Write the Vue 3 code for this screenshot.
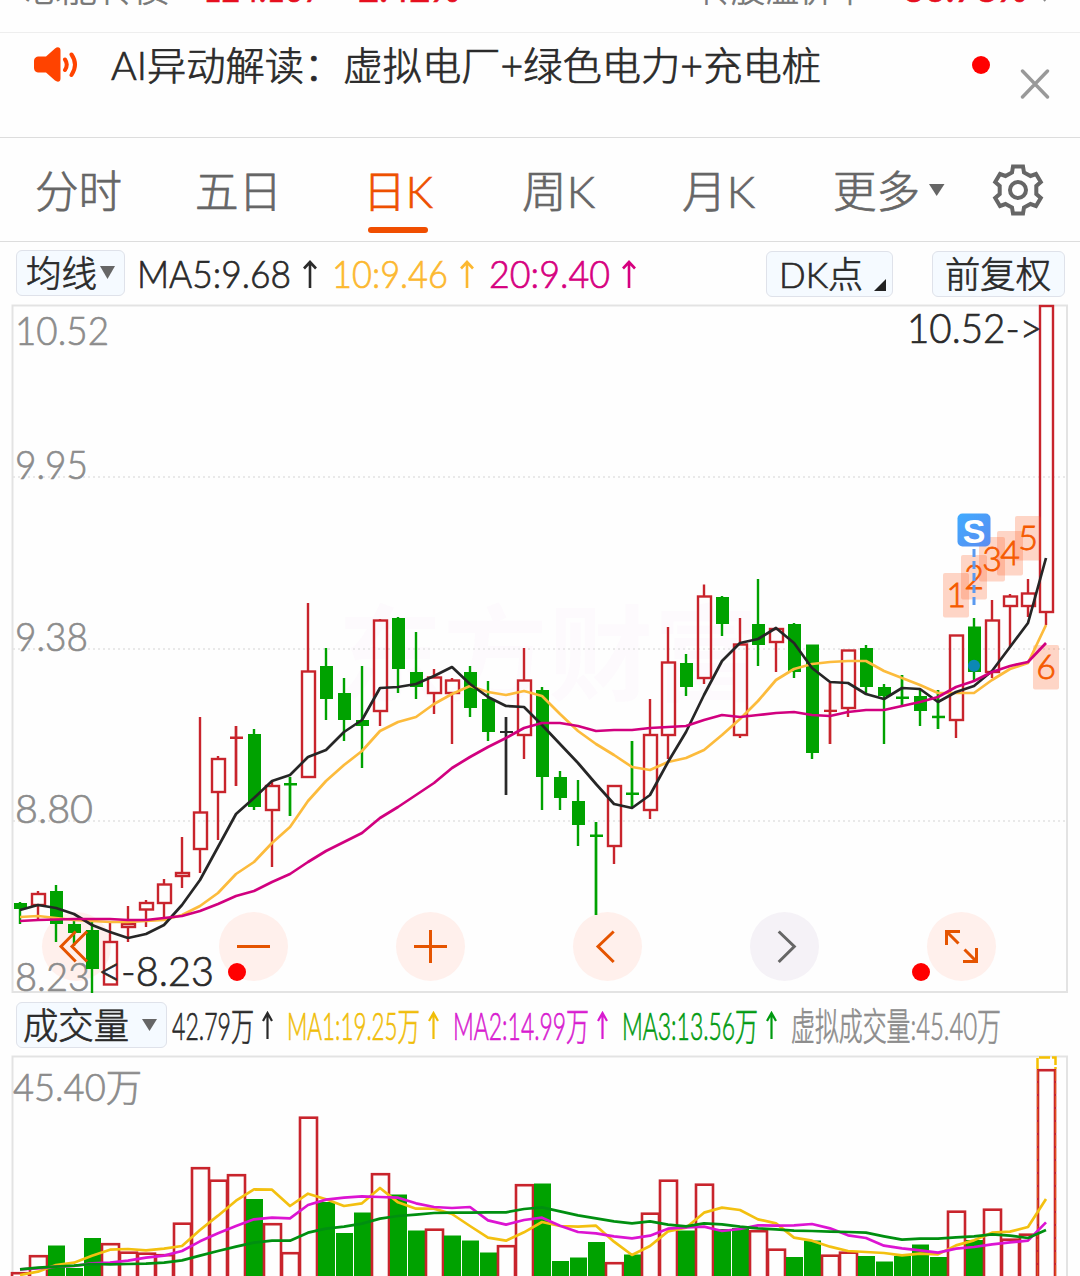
<script setup>
import { h } from 'vue'

// Single text run squeezed or stretched to an exact width
const FitText = (props) =>
  h('svg', { width: props.width, height: props.size * 1.3, class: 'fit', style: { fontSize: props.size + 'px' } }, [
    h('text', {
      x: 0,
      y: props.size,
      fill: 'currentColor',
      textLength: props.width,
      lengthAdjust: 'spacingAndGlyphs',
    }, props.text),
  ])
FitText.props = ['text', 'width', 'size']

const tabs = [
  { text: '分时', width: 87 },
  { text: '五日', width: 87 },
  { text: '日K', width: 70, active: true },
  { text: '周K', width: 73 },
  { text: '月K', width: 73 },
]

const maLines = [
  { name: 'ma5', text: 'MA5:9.68', width: 154 },
  { name: 'ma10', text: '10:9.46', width: 116 },
  { name: 'ma20', text: '20:9.40', width: 121 },
]

const volLines = [
  { name: 'ma5', text: '42.79万', width: 82 },
  { name: 'v1', text: 'MA1:19.25万', width: 133 },
  { name: 'v2', text: 'MA2:14.99万', width: 136 },
  { name: 'v3', text: 'MA3:13.56万', width: 136 },
]

const STEP = 18
const cx = (i) => 20 + i * STEP

// [colour, high, body top, body bottom, low]
const candles = [
  ['g', 902, 903, 909, 924], ['r', 891, 893, 906, 919], ['g', 885, 891, 924, 942], ['g', 921, 924, 933, 946],
  ['g', 921, 930, 969, 993], ['r', 922, 941, 985.5, 985], ['r', 906, 923, 928, 942], ['r', 900, 902, 910.5, 927],
  ['r', 879, 883.5, 904, 917], ['r', 837, 872, 877, 888], ['r', 717, 811.5, 850, 873], ['r', 756, 758, 793, 840],
  ['r', 726, 736.5, 739, 786], ['g', 729, 734, 807, 810], ['r', 782, 785, 811, 867], ['g', 777, 783, 785.5, 816],
  ['r', 603, 670.5, 778, 778], ['g', 648, 666, 699, 720], ['g', 678, 693, 720, 741], ['g', 666, 720, 726, 768],
  ['r', 619, 619.5, 712, 726], ['g', 617, 618, 669, 693], ['g', 632, 672, 687, 699], ['r', 669, 676.5, 694, 714],
  ['r', 678, 679.5, 694, 744], ['g', 666, 672, 708, 717], ['g', 681, 699, 732, 741], ['k', 717, 731, 733, 795],
  ['r', 648, 679.5, 736, 759], ['g', 687, 690, 777, 810], ['g', 771, 777, 798, 810], ['g', 780, 801, 825, 846],
  ['g', 822, 834.5, 837, 915], ['r', 785, 785, 847, 864], ['g', 741, 792.5, 795, 808], ['r', 699, 734, 811, 819],
  ['r', 627, 661.5, 736, 759], ['g', 654, 663, 687, 696], ['r', 584.5, 595.5, 679, 684], ['g', 596, 597, 624, 636],
  ['r', 618, 643.5, 736, 738], ['g', 579, 624, 645, 666], ['r', 628, 628, 643, 672], ['g', 623, 624, 672, 678],
  ['g', 644.5, 644.5, 753, 759], ['r', 683, 709.7, 712, 744], ['r', 649.5, 649.5, 709, 717], ['g', 645, 648, 687, 693],
  ['g', 684, 687, 696, 744], ['g', 675, 696.5, 699, 707], ['g', 690, 696, 711, 726], ['g', 690, 715.7, 718.2, 729],
  ['r', 634.5, 634.5, 721, 738], ['g', 618, 626.5, 672, 681], ['r', 600, 619.5, 673, 678], ['r', 594, 595.5, 607, 647],
  ['r', 579, 592.5, 607, 617], ['r', 305, 305, 613, 625],
].map(([c, high, top, bottom, low], i) => ({ c, high, top, bottom, low, x: cx(i), thin: bottom - top < 3 }))

const ma5 = [
  910, 905, 908, 914, 925, 932, 938, 934, 925, 905, 880, 847, 814, 798, 781, 775, 757, 750, 732, 720, 688, 687, 684, 676,
  667, 684, 697, 706, 707, 725, 744, 763, 784, 804, 808, 795, 762, 732, 695, 661, 643, 639, 628, 643, 668, 682, 683, 694,
  699, 688, 689, 702, 692, 686, 671, 647, 623, 558,
]
const ma10 = [
  917, 916, 918, 920, 921, 922, 922, 921, 920, 915, 906, 893, 874, 862, 843, 827, 801, 781, 765, 751, 731, 722, 717, 704,
  694, 686, 692, 695, 691, 696, 714, 731, 744, 755, 767, 770, 762, 758, 750, 735, 719, 701, 680, 669, 664, 662, 661, 661,
  671, 678, 685, 693, 693, 693, 680, 669, 663, 625,
]
const ma20 = [
  921, 920, 919.5, 919, 919, 919, 920, 920, 918, 916, 911, 904, 896, 891, 882, 874, 862, 851, 842, 833, 818, 807, 795,
  783, 768, 757, 747, 738, 728, 723, 723, 726, 731, 730, 730, 728, 727, 726, 720, 715, 717, 715, 713, 712, 715, 716, 712,
  710, 710, 706, 702, 697, 687, 681, 672, 666, 662, 643,
]

const volumes = [
  ['r', 1272], ['r', 1255], ['g', 1245.5], ['g', 1268], ['g', 1238], ['r', 1243], ['r', 1251.5], ['r', 1252.5],
  ['r', 1254], ['r', 1222.5], ['r', 1167], ['r', 1179.5], ['r', 1174], ['g', 1199], ['r', 1223], ['r', 1252],
  ['r', 1116.5], ['g', 1202], ['g', 1233], ['g', 1212.5], ['r', 1173], ['g', 1194.5], ['g', 1230.5], ['r', 1228.5],
  ['g', 1235.5], ['g', 1240.5], ['g', 1252.5], ['r', 1245], ['r', 1184], ['g', 1183.5], ['g', 1261], ['g', 1257.5],
  ['g', 1242], ['r', 1262], ['g', 1254.5], ['r', 1212.5], ['r', 1179.5], ['g', 1230.5], ['r', 1183.5], ['g', 1229],
  ['g', 1228], ['r', 1230], ['r', 1248.5], ['g', 1257], ['g', 1240.5], ['r', 1254.5], ['r', 1251.5], ['g', 1256],
  ['g', 1261.5], ['g', 1256], ['g', 1244.5], ['g', 1257], ['r', 1210.5], ['g', 1240], ['r', 1208.5], ['r', 1238.5],
  ['r', 1233.5], ['r', 1069],
].map(([c, top], i) => ({ c, top, x: cx(i) + 0.5 }))

// Volume averages, in thirds of a pixel below y = 990
const vol1 = [
  855, 845, 825, 818, 797, 779, 777, 781, 776, 768, 720, 677, 632, 598, 599, 648, 611, 628, 648, 640, 594, 637, 656, 656,
  672, 708, 743, 752, 727, 696, 708, 710, 707, 755, 795, 768, 724, 713, 668, 653, 660, 688, 700, 743, 752, 770, 783, 786,
  789, 796, 791, 793, 766, 751, 728, 725, 711, 627,
]
const vol2 = [
  838, 835, 830, 828, 820, 818, 812, 803, 797, 783, 754, 730, 708, 688, 683, 685, 645, 629, 623, 619, 621, 623, 640, 651,
  654, 651, 691, 704, 690, 683, 707, 726, 730, 739, 745, 737, 716, 712, 710, 723, 717, 706, 707, 706, 702, 715, 736, 744,
  767, 775, 781, 788, 776, 771, 763, 757, 752, 697,
]
const vol3 = [
  838, 833, 830, 827, 822, 823, 822, 821, 818, 811, 797, 783, 770, 758, 752, 752, 728, 716, 710, 701, 686, 678, 674, 669,
  668, 668, 667, 667, 657, 652, 664, 676, 685, 694, 700, 694, 704, 709, 700, 703, 710, 715, 718, 722, 723, 725, 726, 728,
  739, 749, 746, 746, 742, 739, 733, 737, 744, 720,
]

const line = (ys) => ys.map((y, i) => `${cx(i)},${y}`).join(' ')
const volLine = (ys) => line(ys.map((v) => 990 + v / 3))

const priceLabels = [
  { text: '10.52', y: 344.5, width: 94 },
  { text: '9.95', y: 479, width: 73 },
  { text: '9.38', y: 650.5, width: 73 },
  { text: '8.80', y: 822.5, width: 78 },
  { text: '8.23', y: 990.5, width: 75 },
]

const counts = [
  { n: 1, x: 943, y: 573 },
  { n: 2, x: 961, y: 555 },
  { n: 3, x: 979, y: 537 },
  { n: 4, x: 997, y: 531 },
  { n: 5, x: 1015, y: 516 },
  { n: 6, x: 1033, y: 645 },
]

const buttons = [76.5, 253.5, 430.5, 607.5, 784.5, 961.5]
</script>

<template>
  <div class="page">
    <!-- Convertible bond quote, scrolled half out of view -->
    <div class="bond">
      <FitText class="label" text="芯能转债" :width="144" :size="36" />
      <FitText class="up price" text="124.167" :width="119" :size="36" />
      <FitText class="up change" text="2.42%" :width="102" :size="36" />
      <FitText class="label premium" text="转股溢价率" :width="170" :size="36" />
      <FitText class="up rate" text="30.78%" :width="124" :size="36" />
      <svg class="bond-arrow" width="8" height="16" viewBox="0 0 8 16" fill="none" stroke="#888" stroke-width="2">
        <path d="M1 2l5 6-5 6" />
      </svg>
    </div>

    <!-- Notice -->
    <div class="notice">
      <svg class="speaker" width="46" height="38" viewBox="0 0 46 38">
        <path fill="#ff4300" d="M6.500 10.500h6.500L22 2.500c2.500-2 5.500-1.500 5.500 2v28c0 3.500-3 4-5.500 2L13 26.500H6.500c-4 0-5.500-2-5.500-5v-6c0-3 1.500-5 5.500-5z" />
        <path fill="none" stroke="#ff4300" stroke-width="4" stroke-linecap="round" d="M32 13.500q3.500 5 0 10.500M38.500 8.500q7 10 0 20.500" />
      </svg>
      <FitText class="notice-text" text="AI异动解读：虚拟电厂+绿色电力+充电桩" :width="710" :size="38.7" />
      <span class="dot"></span>
      <svg class="close" width="30" height="30" viewBox="0 0 30 30" stroke="#999" stroke-width="3.400" stroke-linecap="round">
        <path d="M2.500 2l25 26M27.500 2l-25 26" />
      </svg>
    </div>

    <!-- Period tabs -->
    <div class="tabs">
      <div v-for="tab in tabs" :key="tab.text" class="tab" :class="{ active: tab.active }">
        <FitText :text="tab.text" :width="tab.width" :size="44" />
      </div>
      <div class="tab more">
        <FitText text="更多" :width="87" :size="44" />
        <svg width="16" height="12" viewBox="0 0 16 12"><path fill="#666" d="M0 0h15.500L7.700 12z" /></svg>
      </div>
      <svg class="gear" width="54" height="54" viewBox="-27 -27 54 54" fill="none" stroke="#666" stroke-width="4">
        <path d="M-5-23.500H5L6-17.500 12.500-14 18-16 22.800-8 18.300-4V4L22.800 8 18 16 12.500 14 6 17.500 5 23.500H-5L-6 17.500-12.500 14-18 16-22.800 8-18.300 4V-4L-22.800-8-18-16-12.500-14-6-17.500z" />
        <circle r="8" />
      </svg>
    </div>

    <!-- Moving averages -->
    <div class="ma-row">
      <div class="chip">
        <FitText text="均线" :width="71" :size="36" />
        <svg width="15" height="13" viewBox="0 0 15 13"><path fill="#666" d="M0 0h15L7.500 13z" /></svg>
      </div>
      <div class="values">
        <span v-for="m in maLines" :key="m.name" class="value" :class="m.name">
          <FitText :text="m.text" :width="m.width" :size="37.500" />
          <svg class="arrow" width="16" height="28" viewBox="0 0 16 28" fill="none" stroke="currentColor" stroke-width="2.600">
            <path d="M8 28V2M2 8.500L8 2l6 6.500" />
          </svg>
        </span>
      </div>
      <div class="chip dk">
        <FitText text="DK点" :width="84" :size="36" />
        <svg width="12" height="12" viewBox="0 0 12 12"><path fill="#222" d="M12 0v12H0z" /></svg>
      </div>
      <div class="chip fq">
        <FitText text="前复权" :width="106" :size="36" />
      </div>
    </div>

    <!-- Candlestick chart -->
    <svg class="chart" width="1080" height="689" viewBox="0 304 1080 689">
      <text class="watermark" x="338" y="693" textLength="420">东方财富</text>
      <path class="frame" d="M12.500 305.500H1067V992H12.500z" />
      <g class="grid">
        <line v-for="y in [477, 649, 821]" :key="y" x1="13" x2="1067" :y1="y" :y2="y" />
      </g>
      <circle v-for="(x, i) in buttons" :key="x" :cx="x" cy="946.500" r="34.500" :class="i === 4 ? 'round off' : 'round'" />

      <text
        v-for="p in priceLabels"
        :key="p.text"
        class="axis"
        x="15"
        :y="p.y"
        :textLength="p.width"
        lengthAdjust="spacingAndGlyphs"
      >{{ p.text }}</text>

      <g v-for="k in candles" :key="k.x" :class="'candle ' + k.c">
        <line v-if="k.high < k.top" :x1="k.x" :x2="k.x" :y1="k.high" :y2="k.top + 1" />
        <line v-if="k.low > k.bottom" :x1="k.x" :x2="k.x" :y1="k.bottom - 1" :y2="k.low" />
        <line v-if="k.thin" :x1="k.x" :x2="k.x" :y1="k.high" :y2="k.low" />
        <rect v-if="k.thin || k.c === 'g'" class="solid" :x="k.x - 6" :y="k.top" width="13" :height="k.bottom - k.top" />
        <rect v-else :x="k.x - 6" :y="k.top + 1" width="13" :height="k.bottom - k.top - 2" />
      </g>

      <circle cx="974" cy="665.700" r="6" fill="#0c88b4" />
      <g v-for="c in counts" :key="c.n">
        <rect class="count-box" :x="c.x" :y="c.y" width="26" height="44.500" rx="2" />
        <text class="count" :x="c.x + 13" :y="c.y + 34">{{ c.n }}</text>
      </g>

      <polyline class="line ma10" :points="line(ma10)" />
      <polyline class="line ma5" :points="line(ma5)" />
      <polyline class="line ma20" :points="line(ma20)" />

      <!-- Sell signal -->
      <defs>
        <linearGradient id="sell" x1="0" y1="0" x2="1" y2="1">
          <stop offset="0" stop-color="#3fabff" />
          <stop offset="1" stop-color="#5c8cf0" />
        </linearGradient>
      </defs>
      <line x1="974" x2="974" y1="549" y2="606" stroke="#5b9af0" stroke-width="3" stroke-dasharray="8 4" />
      <rect x="957.500" y="513.500" width="33" height="33" rx="5" fill="url(#sell)" />
      <text class="sell" x="974" y="542.500">S</text>

      <text class="tip" x="907" y="342.500" textLength="135" lengthAdjust="spacingAndGlyphs">10.52-&gt;</text>
      <text class="tip" x="98" y="985.500" textLength="116" lengthAdjust="spacingAndGlyphs">&lt;-8.23</text>

      <!-- Button glyphs -->
      <g class="glyph">
        <path d="M75.700 931.500L61 946.500l14.700 15M87 931.500L72 946.500l15 15" />
        <path d="M237 946.500h33M414 946.500h33M430.500 930v33" />
        <path d="M613.700 931.500L598 946.500l15.700 15.500" />
        <path class="grey" d="M778.700 931.500l15.600 15-15.600 15.500" />
        <path d="M946.500 945v-13.500h13.500M947 932l11.500 11.500M976.500 948v13.500h-13.500M976 961l-11.500-11.500" />
      </g>
      <circle cx="237" cy="972" r="9" fill="#f00" />
      <circle cx="921" cy="972" r="9" fill="#f00" />
    </svg>

    <!-- Volume header -->
    <div class="vol-row">
      <div class="chip vol-chip">
        <FitText text="成交量" :width="106" :size="36" />
        <svg width="15" height="12" viewBox="0 0 15 12"><path fill="#666" d="M0 0h15L7.500 12z" /></svg>
      </div>
      <div class="values">
        <span v-for="m in volLines" :key="m.text" class="value" :class="m.name">
          <FitText :text="m.text" :width="m.width" :size="38" />
          <svg class="arrow" width="11" height="28" viewBox="0 0 11 28" fill="none" stroke="currentColor" stroke-width="2.200">
            <path d="M5.500 28V2M1 10l4.500-8L10 10" />
          </svg>
        </span>
        <FitText class="virtual" text="虚拟成交量:45.40万" :width="210" :size="38" />
      </div>
    </div>

    <!-- Volume chart -->
    <svg class="chart" width="1080" height="221" viewBox="0 1055 1080 221">
      <path class="frame" d="M12.500 1290V1056.500H1067V1290" />
      <text class="axis small" x="13" y="1100.500" textLength="129" lengthAdjust="spacingAndGlyphs">45.40万</text>
      <g v-for="v in volumes" :key="v.x" :class="'bar ' + v.c">
        <rect v-if="v.c === 'g'" class="solid" :x="v.x - 8.500" :y="v.top" width="17" height="240" />
        <rect v-else :x="v.x - 8.500" :y="v.top + 1.200" width="17" height="240" />
      </g>
      <path d="M1037.500 1069V1057.500H1055.500V1069" fill="none" stroke="#f5c000" stroke-width="2.500" stroke-dasharray="11 2" />
      <path d="M1037.500 1070V1276M1055.500 1070V1276" fill="none" stroke="#e0501c" stroke-width="1.200" stroke-dasharray="11 2" />
      <polyline class="line v1" :points="volLine(vol1)" />
      <polyline class="line v2" :points="volLine(vol2)" />
      <polyline class="line v3" :points="volLine(vol3)" />
    </svg>
  </div>
</template>

<style>
body {
  margin: 0;
  background: #fff;
}
</style>

<style scoped>
.page {
  width: 1080px;
  height: 1276px;
  overflow: hidden;
  background: #fefefe;
  color: #2a2a2a;
  font-family: Lato, 'Noto Sans CJK SC', sans-serif;
  font-weight: 300;
}

svg {
  display: block;
  flex: none;
}

/* Sits between the light and regular cuts */
.fit :deep(text) {
  stroke: currentColor;
  stroke-width: 0.7;
}

.fit {
  overflow: visible;
}

.bond {
  display: flex;
  height: 32px;
  padding-left: 25px;
  border-bottom: 1px solid #eee;
}

.bond svg {
  margin-top: -33px;
}

.bond .label {
  margin-top: -34px;
  color: #777;
}

.bond .up {
  margin-top: -34px;
  color: #e60f1e;
  font-weight: 400;
}

.bond .price {
  margin-left: 34px;
}

.bond .change {
  margin-left: 36px;
}

.bond .premium {
  margin-left: 237px;
}

.bond .rate {
  margin-left: 36px;
}

.bond .bond-arrow {
  margin: -13px 0 0 16px;
}

.notice {
  display: flex;
  height: 104px;
  padding-left: 33px;
  border-bottom: 1px solid #ddd;
}

.speaker {
  margin-top: 13px;
}

.notice-text {
  margin: 8px 0 0 32px;
}

.dot {
  width: 18px;
  height: 18px;
  margin: 22.500px 0 0 151px;
  border-radius: 50%;
  background: #f00;
}

.close {
  margin: 36px 0 0 30px;
}

.tabs {
  display: flex;
  height: 103px;
  padding-left: 35px;
  border-bottom: 1px solid #ddd;
  color: #666;
}

.tab {
  display: flex;
  flex-direction: column;
  align-items: center;
  padding-top: 26px;
  margin-right: 73px;
}

.tab:nth-child(2) {
  margin-right: 81px;
}

.tab:nth-child(3) {
  margin-right: 89px;
}

.tab:nth-child(4) {
  margin-right: 87px;
}

.tab:nth-child(5) {
  margin-right: 78px;
}

.active {
  color: #ee5000;
}

.active::after {
  content: '';
  width: 60px;
  height: 6px;
  margin-top: 6px;
  margin-right: 1px;
  border-radius: 3px;
  background: #f04e00;
}

.tab.more {
  flex-direction: row;
  align-items: flex-start;
  gap: 9px;
  margin-right: 46px;
}

.more svg:last-child {
  margin-top: 20px;
}

.gear {
  margin-top: 25px;
}

.ma-row,
.vol-row {
  display: flex;
  align-items: flex-start;
  padding-left: 16px;
}

.ma-row {
  height: 54px;
  padding-top: 8px;
}

.chip {
  box-sizing: border-box;
  display: flex;
  align-items: flex-start;
  width: 109px;
  height: 46px;
  padding-left: 9px;
  border: 1px solid #dfe2ea;
  border-radius: 6px;
  background: #f5faff;
}

.chip svg:last-child:not(.fit) {
  margin: 15px 0 0 3px;
}

.values {
  display: flex;
}

.value {
  display: flex;
  color: #2a2a2a;
}

.ma-row .values {
  width: 629px;
  padding-left: 12px;
}

.ma-row .value {
  gap: 11px;
  margin-right: 14px;
}

.ma-row .arrow {
  margin-top: 10px;
}

.chip.dk {
  width: 127px;
  padding-left: 12px;
  margin-top: 1px;
}

.chip.dk svg:last-child:not(.fit) {
  margin: 27px 0 0 11px;
}

.chip.fq {
  width: 133px;
  padding-left: 12px;
  margin: 1px 0 0 39px;
}

.vol-row {
  height: 53px;
  padding-top: 9px;
}

.vol-chip {
  width: 151px;
  padding-left: 6px;
}

.vol-chip svg:last-child:not(.fit) {
  margin: 16px 0 0 13px;
}

.vol-row .values {
  padding-left: 5px;
}

.vol-row .value {
  gap: 8px;
  margin-right: 14px;
}

.vol-row .arrow {
  margin-top: 9px;
}

.virtual {
  color: #8c8c8c;
}

.value.ma10 {
  color: #fcb830;
}

.value.v1 {
  color: #f0bd08;
}

.value.ma20 {
  color: #d6007f;
}

.value.v2 {
  color: #d81bd0;
}

.value.v3 {
  color: #009a10;
}

.frame {
  fill: none;
  stroke: #e3e3e3;
  stroke-width: 2;
}

.grid line {
  stroke: #e2e2e2;
  stroke-width: 1.5;
  stroke-dasharray: 2 3;
}

.watermark {
  font-size: 104px;
  font-weight: 700;
  fill: #fdfafd;
}

.round {
  fill: #fff0ec;
}

.round.off {
  fill: #f5f2f7;
}

.axis {
  font-size: 40px;
  fill: #8c8c8c;
  stroke: #8c8c8c;
  stroke-width: 0.7;
}

.axis.small {
  font-size: 38px;
}

.tip {
  font-size: 41px;
  fill: #2a2a2a;
  stroke: #2a2a2a;
  stroke-width: 0.7;
}

.candle,
.bar {
  fill: none;
  stroke-width: 2.4;
}

.r {
  stroke: #c8242c;
}

.bar {
  stroke-width: 2.6;
}

.g {
  stroke: #00a200;
}

.k {
  stroke: #2a2a2a;
}

.solid {
  stroke: none;
}

.r .solid {
  fill: #c8242c;
}

.g .solid {
  fill: #00a200;
}

.k .solid {
  fill: #2a2a2a;
}

.count-box {
  fill: #ff5a1e;
  fill-opacity: 0.25;
}

.count {
  font-size: 34px;
  text-anchor: middle;
  fill: #f55a00;
  stroke: #f55a00;
  stroke-width: 0.8;
}

.sell {
  font-family: 'Liberation Sans', sans-serif;
  font-size: 34px;
  font-weight: 700;
  text-anchor: middle;
  fill: #fff;
}

.line {
  fill: none;
  stroke-width: 2.7;
  stroke-linejoin: round;
}

.line.ma5 {
  stroke: #262626;
}

.line.ma10 {
  stroke: #fcbb3c;
}

.line.ma20 {
  stroke: #d1007f;
}

.line.v1 {
  stroke: #f3c010;
}

.line.v2 {
  stroke: #dc14d2;
}

.line.v3 {
  stroke: #008f10;
}

.glyph {
  fill: none;
  stroke: #e55400;
  stroke-width: 3;
}

.glyph .grey {
  stroke: #666;
}
</style>
